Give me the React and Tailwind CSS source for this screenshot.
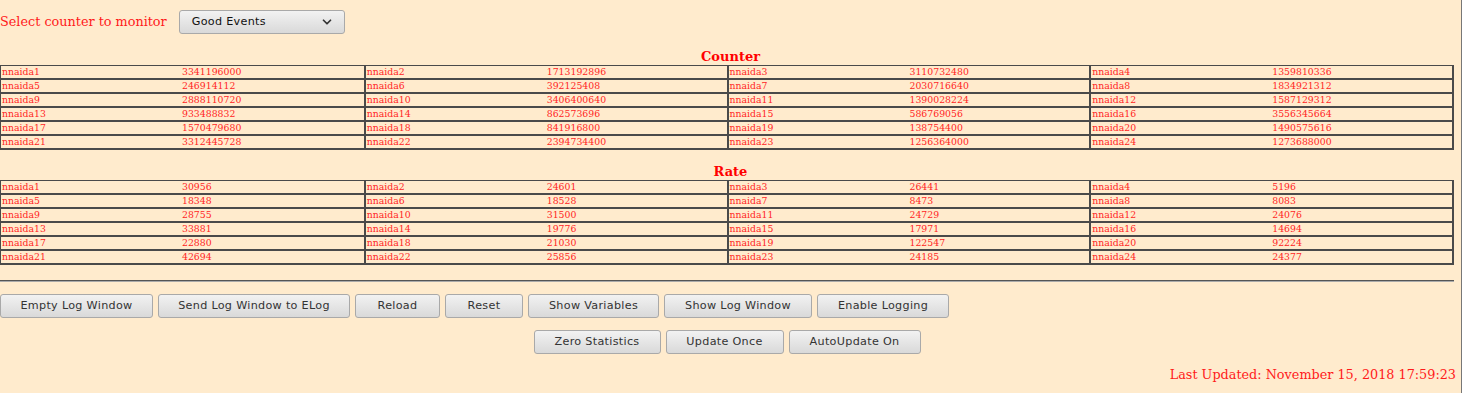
import { ChevronDown } from "lucide-react";

const counters = [
    ["nnaida1", "3341196000"], ["nnaida2", "1713192896"], ["nnaida3", "3110732480"], ["nnaida4", "1359810336"],
    ["nnaida5", "246914112"], ["nnaida6", "392125408"], ["nnaida7", "2030716640"], ["nnaida8", "1834921312"],
    ["nnaida9", "2888110720"], ["nnaida10", "3406400640"], ["nnaida11", "1390028224"], ["nnaida12", "1587129312"],
    ["nnaida13", "933488832"], ["nnaida14", "862573696"], ["nnaida15", "586769056"], ["nnaida16", "3556345664"],
    ["nnaida17", "1570479680"], ["nnaida18", "841916800"], ["nnaida19", "138754400"], ["nnaida20", "1490575616"],
    ["nnaida21", "3312445728"], ["nnaida22", "2394734400"], ["nnaida23", "1256364000"], ["nnaida24", "1273688000"],
];

const rates = [
    ["nnaida1", "30956"], ["nnaida2", "24601"], ["nnaida3", "26441"], ["nnaida4", "5196"],
    ["nnaida5", "18348"], ["nnaida6", "18528"], ["nnaida7", "8473"], ["nnaida8", "8083"],
    ["nnaida9", "28755"], ["nnaida10", "31500"], ["nnaida11", "24729"], ["nnaida12", "24076"],
    ["nnaida13", "33881"], ["nnaida14", "19776"], ["nnaida15", "17971"], ["nnaida16", "14694"],
    ["nnaida17", "22880"], ["nnaida18", "21030"], ["nnaida19", "122547"], ["nnaida20", "92224"],
    ["nnaida21", "42694"], ["nnaida22", "25856"], ["nnaida23", "24185"], ["nnaida24", "24377"],
];

const topButtons = [
    ["Empty Log Window", "w-[153px]"],
    ["Send Log Window to ELog", "w-[192px]"],
    ["Reload", "w-[85px]"],
    ["Reset", "w-[78px]"],
    ["Show Variables", "w-[131px]"],
    ["Show Log Window", "w-[148px]"],
    ["Enable Logging", "w-[132px]"],
];

const bottomButtons = [
    ["Zero Statistics", "w-[127px]"],
    ["Update Once", "w-[118px]"],
    ["AutoUpdate On", "w-[132px]"],
];

const Button = ({ label, width }) => (
    <button className={`${width} h-[24px] rounded-[3px] border border-[#a9a9a9] bg-gradient-to-b from-[#f2f2f2] to-[#d9d9d9] text-[11.2px] text-[#333] font-['DejaVu_Sans',sans-serif] tracking-[0.3px]`}>
        {label}
    </button>
);

const CounterTable = ({ title, rows }) => {
    let grouped = [];
    for (let i = 0; i < rows.length; i += 4) grouped.push(rows.slice(i, i + 4));

    return (
        <div>
            <h2 className="text-center text-[13px] font-bold text-[#ff0000] leading-[17px] font-['DejaVu_Serif',serif]">{title}</h2>
            <div className="w-[1454px] border-t border-l border-[#4a4a4a] border-r-2 border-r-[#4a4a4a] border-b-2 border-b-[#4a4a4a]">
                {grouped.map((row, r) => (
                    <div key={r} className={`grid grid-cols-4 ${r > 0 ? "border-t-2 border-[#4a4a4a]" : ""}`}>
                        {row.map(([name, value], c) => (
                            <div key={c} className={`flex h-[12px] items-center text-[9.33px] text-[#ff1f1f] font-['DejaVu_Serif',serif] ${c > 0 ? "border-l-2 border-[#4a4a4a]" : ""}`}>
                                <span className="w-[181px] pl-[1px]">{name}</span>
                                <span>{value}</span>
                            </div>
                        ))}
                    </div>
                ))}
            </div>
        </div>
    );
};

const App = () => {
    return (
        <div className="w-[1462px] h-[393px] bg-[#ffebcd] border-r border-[#777] overflow-hidden">
            <div className="flex items-center h-[44px]">
                <label className="text-[12.8px] text-[#ff1a1a] font-['DejaVu_Serif',serif] mr-[12px]">Select counter to monitor</label>
                <div className="w-[166px] h-[24px] rounded-[3px] border border-[#a9a9a9] bg-gradient-to-b from-[#f2f2f2] to-[#d9d9d9] flex items-center justify-between pl-[12px] pr-[10px] text-[11.2px] text-[#111] font-['DejaVu_Sans',sans-serif] tracking-[0.3px]">
                    <span>Good Events</span>
                    <ChevronDown size={14} strokeWidth={3} className="text-[#333]" />
                </div>
            </div>

            <div className="h-[4px]"></div>
            <CounterTable title="Counter" rows={counters} />
            <div className="h-[13px]"></div>
            <CounterTable title="Rate" rows={rates} />

            <div className="w-[1454px] mt-[15px] border-t border-[#555] border-b border-b-[#aaa]"></div>

            <div className="flex gap-[5px] mt-[12px]">
                {topButtons.map(([label, width]) => <Button key={label} label={label} width={width} />)}
            </div>
            <div className="w-[1454px] flex justify-center gap-[5px] mt-[12px]">
                {bottomButtons.map(([label, width]) => <Button key={label} label={label} width={width} />)}
            </div>

            <div className="w-[1456px] text-right mt-[11px] text-[12.8px] text-[#ff1a1a] font-['DejaVu_Serif',serif]">
                Last Updated: November 15, 2018 17:59:23
            </div>
        </div>
    );
};

export default App;
